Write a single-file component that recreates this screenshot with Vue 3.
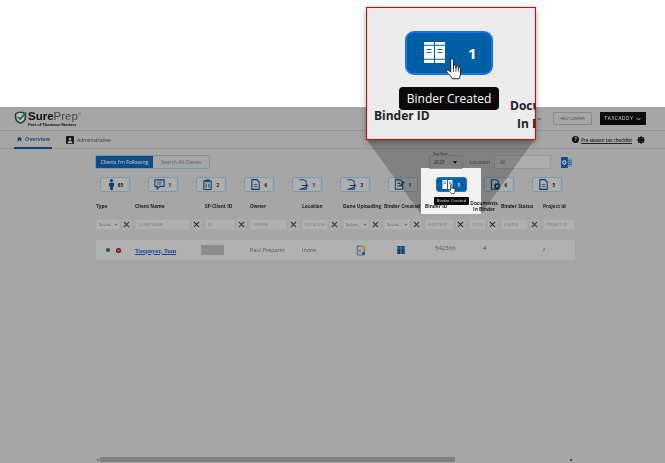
<script setup>
const stats = [
  { k: 'person', n: 65 }, { k: 'chat', n: 1 }, { k: 'clip', n: 2 }, { k: 'doc', n: 6 }, { k: 'arrow', n: 1 },
  { k: 'arrow', n: 3 }, { k: 'edit', n: 1 }, { k: 'binder', n: 1, active: true }, { k: 'sync', n: 6 }, { k: 'doc', n: 5 }
]
const cols = [
  { label: 'Type', kind: 'select' },
  { label: 'Client Name', ph: 'CLIENT NAME' },
  { label: 'SP Client ID', ph: 'ID' },
  { label: 'Owner', ph: 'OWNER' },
  { label: 'Location', ph: 'LOCATION' },
  { label: 'Done Uploading', kind: 'select' },
  { label: 'Binder Created', kind: 'select' },
  { label: 'Binder ID', ph: 'BINDER ID' },
  { label: 'Documents In Binder', ph: 'DOCU' },
  { label: 'Binder Status', ph: 'STATUS' },
  { label: 'Project Id', ph: 'PROJECT ID', noClear: true }
]
</script>

<template>
  <div class="screen">
    <div class="page">
      <header class="top">
        <div class="logo">
          <svg class="logo-mark" viewBox="0 0 16 16"><path d="M2 3.500C4 2 6 1.500 8 1.500S12 2 14 3.500v4.700c0 3-2.600 5.200-6 6.600-3.400-1.400-6-3.600-6-6.600z" fill="#c2c2c2" stroke="#263f42" stroke-width="2"/><path d="M4.800 7.200 7.600 10 14.800 1.800" fill="none" stroke="#1c7253" stroke-width="2.300"/></svg>
          <div>
            <div class="logo-name"><b>Sure</b>Prep<sup>®</sup></div>
            <div class="logo-sub">Part of Thomson Reuters</div>
          </div>
        </div>
        <div class="top-actions">
          <svg class="top-caret" viewBox="0 0 8 5" width="5" height="4"><path d="M1 1l3 3 3-3" fill="none" stroke="#333" stroke-width="1.200"/></svg>
          <span class="help">HELP CENTER</span>
          <span class="caddy">TAXCADDY <svg viewBox="0 0 8 5" width="5" height="4"><path d="M1 1l3 3 3-3" fill="none" stroke="#ddd" stroke-width="1.400"/></svg></span>
        </div>
      </header>

      <nav class="tabs">
        <div class="tab on">
          <svg viewBox="0 0 10 10" width="8" height="8"><path d="M5 .5 10 5H8.500v4.500H6V6.500H4v3H1.500V5H0z" fill="#0d3f6e"/></svg>
          <span>Overview</span>
        </div>
        <div class="tab">
          <svg viewBox="0 0 10 10" width="8" height="8"><rect width="10" height="10" rx="1" fill="#1a1a1a"/><circle cx="5" cy="3.800" r="1.700" fill="#a6a6a6"/><path d="M2 9c0-2 1.500-3 3-3s3 1 3 3z" fill="#a6a6a6"/></svg>
          <span>Administrative</span>
        </div>
        <div class="tabs-right">
          <i class="q">?</i>
          <a>Pre-season tax checklist</a>
          <svg viewBox="0 0 12 12" width="8" height="8"><circle cx="6" cy="6" r="3.400" fill="none" stroke="#111" stroke-width="2.400"/><path d="M6 0v12M0 6h12M1.800 1.800l8.400 8.400M10.200 1.800l-8.400 8.400" stroke="#111" stroke-width="1.500"/></svg>
        </div>
      </nav>

      <main class="board">
        <div class="controls">
          <div class="toggle">
            <span class="t-on">Clients I'm Following</span>
            <span class="t-off">Search All Clients</span>
          </div>
          <div class="year">
            <label>Tax Year</label>
            <div class="year-box">2023 <em></em></div>
          </div>
          <span class="loc-label">Location</span>
          <div class="loc-box">All</div>
          <svg class="outlook" viewBox="0 0 12 12" width="11" height="11"><rect x="5" y="1.500" width="7" height="9" fill="#6f94bd"/><path d="M7.500 4h4.500M7.500 6h4.500M7.500 8h4.500" stroke="#114c88" stroke-width=".6"/><rect x="0" y="0" width="7.500" height="12" rx=".6" fill="#114c88"/><circle cx="3.700" cy="6" r="1.800" fill="none" stroke="#d5dde5" stroke-width="1.100"/></svg>
        </div>

        <div class="stats">
          <button v-for="(s, i) in stats" :key="i" class="stat" :class="{ active: s.active }">
            <svg viewBox="0 0 12 12" width="11" height="11">
              <g v-if="s.k === 'person'" fill="#0d3f6e"><circle cx="6" cy="1.700" r="1.700"/><path d="M3.500 4h5l.5 4H7.800l-.4 4H4.600l-.4-4H3z"/></g>
              <g v-else-if="s.k === 'chat'" fill="none" stroke="#0d3f6e" stroke-width="1.200"><path d="M1 1h10v7H6l-2.500 3V8H1z"/><path d="M3.500 3.500h5M3.500 5.500h4" stroke-width=".8"/></g>
              <g v-else-if="s.k === 'clip'" fill="none" stroke="#0d3f6e" stroke-width="1.200"><rect x="2" y="2" width="8" height="9.500" rx=".8"/><path d="M4 1h4v2H4zM4.500 5v4.500M7.500 5v4.500" stroke-width="1"/></g>
              <g v-else-if="s.k === 'doc'" fill="none" stroke="#0d3f6e" stroke-width="1.200"><path d="M2 .7h5.500L10 3.300v8H2z"/><path d="M4 6h4M4 8.300h4" stroke-width=".8"/></g>
              <g v-else-if="s.k === 'arrow'"><path d="M1.500.7h5L9 3.300V5M9 9v2.300H1.500z" fill="none" stroke="#0d3f6e" stroke-width="1.100"/><path d="M4 6.500h4.500V4.500L11.500 7 8.500 9.500v-2H4z" fill="#0d3f6e"/></g>
              <g v-else-if="s.k === 'edit'" fill="none" stroke="#0d3f6e" stroke-width="1.100"><path d="M1.500.7H7l2.500 2.500v8.100h-8z"/><path d="M3.500 5h3M3.500 7.500h3"/><path d="M6.500 8 11 3" stroke-width="1.400"/></g>
              <g v-else-if="s.k === 'sync'"><path d="M1.500.7H7L9.500 3.200v8.100h-8z" fill="none" stroke="#0d3f6e" stroke-width="1.100"/><circle cx="7.800" cy="7.800" r="3.300" fill="#0d3f6e"/><circle cx="7.800" cy="7.800" r="1.300" fill="#a6a6a6"/></g>
              <g v-else fill="#fff"><path d="M.5 1h5v10h-5zM6.500 1h5v10h-5z"/><path d="M1.500 3.300h3M7.500 3.300h3M1.500 5h3M7.500 5h3" stroke="#0060a8" stroke-width=".7"/></g>
            </svg>
            <b>{{ s.n }}</b>
            <template v-if="s.active">
              <svg class="mini-hand" viewBox="0 0 16 22" width="8" height="11"><path d="M5 1.700c0-1.400 2.500-1.400 2.500 0V9V7.300c0-1.300 2.300-1.300 2.300 0V9.500 8c0-1.300 2.200-1.300 2.200 0v2-.800c0-1.200 2-1.200 2 0V14c0 2-.6 3.400-1.500 5H6.500C4.800 16.500 3.500 15.200 1.500 13c-1.200-1.300.5-2.800 1.800-1.700L5 13z" fill="#fff" stroke="#222" stroke-width="1.300"/></svg>
              <span class="mini-tip">Binder Created</span>
            </template>
          </button>
        </div>

        <div class="grid labels">
          <div v-for="c in cols" :key="c.label" class="lab">{{ c.label }}</div>
        </div>

        <div class="grid filters">
          <div v-for="c in cols" :key="c.label" class="fcell">
            <div class="field" :class="{ sel: c.kind === 'select' }">
              <template v-if="c.kind === 'select'"><span>Select...</span><svg viewBox="0 0 8 5" width="4" height="3"><path d="M1 1l3 3 3-3" fill="none" stroke="#333" stroke-width="1.300"/></svg></template>
              <template v-else>{{ c.ph }}</template>
            </div>
            <span v-if="!c.noClear" class="clear"><svg viewBox="0 0 8 8" width="7" height="7"><path d="M1 1l6 6M7 1 1 7" stroke="#2e2e2e" stroke-width="1.200"/></svg></span>
          </div>
        </div>

        <div class="grid row">
          <div class="dots"><i class="green"></i><i class="red"></i></div>
          <a class="name">Taxpayer, Tom</a>
          <div><span class="mask"></span></div>
          <div class="small">Paul Preparer</div>
          <div class="small">Irvine</div>
          <div class="ctr">
            <svg viewBox="0 0 12 12" width="10" height="11"><path d="M1.500.7H8l2 2.500v8.100H1.500z" fill="none" stroke="#335a7e" stroke-width="1"/><rect x="7" y="0" width="4.500" height="4.500" fill="#b79a37"/><path d="M3 5.500h3M3 7.500h3" stroke="#335a7e" stroke-width=".8"/><circle cx="9" cy="9.500" r="2" fill="#335a7e"/></svg>
          </div>
          <div class="ctr">
            <svg viewBox="0 0 12 12" width="8" height="8"><path d="M.5 0h5v12h-5zM6.500 0h5v12h-5z" fill="#0d3f6e"/><path d="M1.500 3h3M7.500 3h3" stroke="#a6a6a6" stroke-width=".8"/></svg>
          </div>
          <div class="raise">542366</div>
          <div class="raise four">4</div>
          <div></div>
          <div>f</div>
        </div>
      </main>

      <div class="scroll">
        <i class="arr"></i>
        <div class="thumb"></div>
        <i class="arr"></i>
      </div>
    </div>

    <svg class="beam" viewBox="0 0 665 463" width="665" height="463"><polygon points="366,139 535,139 481,214 481,168 421,168 421,214" fill="#000" fill-opacity=".22"/></svg>
    <div class="spot"></div>

    <aside class="lens">
      <div class="big-btn">
        <svg class="big-icon" viewBox="0 0 20 20" width="21" height="21"><path d="M0 0h9.500v20H0zM10.500 0h9.500v20h-9.500z" fill="#fff"/><path d="M0 3h9.500M10.500 3h9.500M0 16.500h9.500M10.500 16.500h9.500M2.500 7.200h4.500M13 7.200h4.500M2.500 10h4.500M13 10h4.500" stroke="#0060a8" stroke-width="1"/></svg>
        <b>1</b>
        <svg class="hand" viewBox="0 0 16 22" width="18" height="24"><path d="M5 1.700c0-1.400 2.500-1.400 2.500 0V9V7.300c0-1.300 2.300-1.300 2.300 0V9.500 8c0-1.300 2.200-1.300 2.200 0v2-.800c0-1.200 2-1.200 2 0V14c0 2-.6 3.400-1.500 5H6.500C4.800 16.500 3.500 15.200 1.500 13c-1.200-1.300.5-2.800 1.800-1.700L5 13z" fill="#fff" stroke="#1a1a1a" stroke-width=".9"/><path d="M7.500 9v3.500M9.800 9.500v3M12 10v2.500" stroke="#1a1a1a" stroke-width=".7"/></svg>
      </div>
      <div class="big-tip">Binder Created</div>
      <div class="big-id">Binder ID</div>
      <div class="big-docs">Documents<br><span>In Binder</span></div>
    </aside>
  </div>
</template>

<style>
html, body { margin: 0; background: #fff; }
</style>

<style scoped>
.screen {
  position: relative;
  width: 665px;
  height: 463px;
  overflow: hidden;
  background: #fff;
  font-family: "Open Sans", "Liberation Sans", sans-serif;
}
.page {
  position: absolute;
  inset: 107px 0 0 0;
  display: flex;
  flex-direction: column;
  background: #a6a6a6;
  color: #262626;
}
.top {
  height: 24px;
  display: flex;
  justify-content: space-between;
  align-items: center;
  padding: 0 19px 0 14px;
  border-bottom: 1px solid #969696;
  box-sizing: border-box;
  filter: blur(.35px);
}
.logo { display: flex; align-items: center; gap: 1px; }
.logo-mark { width: 13px; height: 15px; margin-top: -3px; }
.logo-name { font-size: 11.500px; line-height: 11px; color: #444; font-family: "Liberation Sans", sans-serif; }
.logo-name b { color: #111; }
.logo-name sup { font-size: 4px; vertical-align: top; line-height: 6px; }
.logo-sub { font-size: 3.900px; line-height: 5px; font-weight: 700; color: #111; white-space: nowrap; }
.top-actions { display: flex; gap: 8px; align-items: center; }
.top-caret { margin-right: 3px; }
.help {
  width: 39px; height: 13px; box-sizing: border-box;
  border: 1px solid #8b8b8b; border-radius: 1px;
  font-size: 3.800px; line-height: 11px; text-align: center; color: #444; white-space: nowrap;
}
.caddy {
  width: 46px; height: 13px;
  background: #0c0c0c; color: #ddd;
  font-size: 4.800px; line-height: 13px; letter-spacing: .6px;
  display: flex; justify-content: center; align-items: center; gap: 3px;
}
.tabs {
  height: 18px;
  display: flex;
  align-items: stretch;
  padding-left: 14px;
  border-bottom: 1px solid #969696;
  box-sizing: border-box;
  font-size: 5.500px;
  filter: blur(.35px);
}
.tab { display: flex; align-items: center; gap: 3px; padding: 0 2px 0 3px; margin-right: 11px; color: #3c3c3c; font-size: 5px; }
.tab.on { width: 33px; color: #0d3f6e; font-size: 5.500px; font-weight: 600; border-bottom: 2px solid #0d3f6e; height: 16px; }
.tabs-right { margin-left: auto; margin-right: 20px; display: flex; align-items: center; gap: 2px; }
.tabs-right a { font-size: 4.400px; font-weight: 600; text-decoration: underline; color: #222; margin-right: 3px; white-space: nowrap; }
.q { width: 7px; height: 7px; border-radius: 50%; background: #111; color: #bbb; font-size: 5px; line-height: 7px; text-align: center; font-style: normal; font-weight: 700; }
.board { position: relative; z-index: 2; padding-left: 96px; flex: 1; }
.controls { position: relative; height: 14px; margin-top: 6px; display: flex; align-items: center; filter: blur(.35px); }
.toggle {
  display: flex; width: 115px; height: 14px; box-sizing: border-box;
  border: 1px solid #7e93a6; border-radius: 2px; margin-left: -1px;
  font-size: 5px; line-height: 12px; text-align: center;
}
.t-on { width: 57px; background: #0d4c85; color: #d2d2d2; }
.t-off { flex: 1; color: #606060; }
.year { position: relative; margin-left: 219px; }
.year label { position: absolute; top: -4px; left: 4px; font-size: 3.800px; color: #333; line-height: 5px; white-space: nowrap; }
.year-box { width: 34px; height: 14px; box-sizing: border-box; border: 1px solid #949494; border-radius: 1px; padding: 3px 0 0 4px; font-size: 4.500px; color: #333; background: #a3a3a3; position: relative; }
.year-box em { position: absolute; right: 5px; top: 5px; border: 2.500px solid transparent; border-top: 3px solid #111; border-bottom: 0; }
.loc-label { margin-left: 7px; font-size: 5px; color: #4a4a4a; width: 24px; }
.loc-box { width: 57px; height: 14px; box-sizing: border-box; border: 1px solid #9a9a9a; background: #adadad; font-size: 4.800px; padding: 3px 5px; color: #555; }
.outlook { margin-left: 10px; }
.stats { position: relative; display: flex; gap: 18px; margin: 8px 0 0 4px; }
.stat {
  position: relative;
  width: 30px; height: 15px; box-sizing: border-box;
  border: 1px solid #7e98ad; border-radius: 2px;
  background: #adadad; padding: 0 6px 0 5px;
  display: flex; align-items: center; justify-content: space-between;
  font-family: "Open Sans", sans-serif;
  filter: blur(.35px);
}
.stat b { font-size: 4.500px; color: #111; }
.stat.active { width: 31px; background: #0060a8; border-color: #1e74de; border-radius: 3px; filter: blur(.25px); margin-right: -1px; }
.stat.active b { color: #fff; }
.mini-hand { position: absolute; left: 11px; top: 6px; }
.mini-tip {
  position: absolute; left: -3px; top: 19px; width: 35px; height: 8px;
  background: #0b0b0b; border-radius: 1px; color: #ddd;
  font-size: 4.200px; line-height: 8px; text-align: center; font-weight: 400; white-space: nowrap;
}
.grid {
  display: grid;
  grid-template-columns: 39px 70px 45px 52px 41px 41px 41px 44px 32px 42px 32px;
}
.labels { height: 12px; margin-top: 8px; align-items: center; font-size: 4.800px; font-weight: 700; color: #1c1c1c; filter: blur(.25px); }
.lab { line-height: 6px; white-space: nowrap; }
.lab:nth-child(9) { text-align: center; width: 30px; white-space: normal; }
.filters { margin-top: 7px; height: 11px; }
.fcell { display: flex; gap: 2px; padding-right: 4px; align-items: center; filter: blur(.35px); min-width: 0; }
.fcell:last-child { padding-right: 0; }
.field {
  flex: 1; min-width: 0; height: 11px; box-sizing: border-box;
  background: #b0b0b0; border: 1px solid #a9a9a9;
  font-size: 4px; line-height: 9px; padding-left: 2px;
  color: #7c7c7c; overflow: hidden; white-space: nowrap;
}
.field.sel { color: #555; display: flex; align-items: center; justify-content: space-between; padding-right: 1px; }
.clear { width: 9px; height: 11px; flex: none; background: #adadad; display: flex; align-items: center; justify-content: center; }
.row { height: 20px; margin-top: 10px; width: 479px; background: #b0b0b0; align-items: center; font-size: 6px; color: #565656; filter: blur(.35px); }
.small { font-size: 5.500px; }
.dots { display: flex; gap: 6px; padding-left: 10px; align-items: center; }
.dots i { width: 4px; height: 4px; border-radius: 50%; display: block; }
.dots .green { background: #1d6422; }
.dots .red { background: #7a1010; width: 5px; height: 5px; box-shadow: inset 0 0 0 1.500px #7a1010, inset 0 0 0 2px #ccc; }
.name { font-family: "Liberation Serif", serif; font-size: 6.500px; font-weight: 700; color: #1a3fa0; text-decoration: underline; white-space: nowrap; }
.mask { display: block; width: 23px; height: 10px; background: #8c8c8c; margin-left: -4px; }
.ctr { display: flex; align-items: center; padding-left: 13px; }
.raise { margin-top: -5px; padding-left: 10px; }
.four { padding-left: 14px; }
.scroll {
  height: 5px; margin: 0 0 1px 97px; display: flex; align-items: center; gap: 1px; width: 480px;
}
.thumb { width: 355px; height: 5px; background: #808080; }
.arr { width: 2px; height: 2px; background: #777; }
.arr:last-child { margin-left: 114px; background: #444; }
.beam { position: absolute; inset: 0; pointer-events: none; z-index: 4; }
.spot { position: absolute; left: 421px; top: 168px; width: 60px; height: 46px; background: #f2f2f2; z-index: 1; }
.lens {
  position: absolute; left: 366px; top: 7px;
  width: 170px; height: 133px; box-sizing: border-box;
  border: 1px solid #e00000;
  background: #ececec; overflow: hidden; z-index: 5;
  box-shadow: 0 2px 6px rgba(0,0,0,.35);
  color: #222;
}
.big-btn {
  position: absolute; left: 38px; top: 23px;
  width: 88px; height: 44px; box-sizing: border-box;
  background: #005ea2; border: 2px solid #1173f5; border-radius: 9px;
}
.big-btn b { position: absolute; left: 61px; top: 11px; color: #fff; font-size: 15px; line-height: 18px; }
.big-icon { position: absolute; left: 17px; top: 9px; }
.hand { position: absolute; left: 38px; top: 25px; }
.big-tip {
  position: absolute; left: 32px; top: 79px; width: 100px; height: 23px;
  background: #0a0a0a; color: #fff; border-radius: 4px;
  font-size: 12px; line-height: 23px; text-align: center; white-space: nowrap;
}
.big-id { position: absolute; left: 7px; top: 99px; font-size: 12px; font-weight: 700; line-height: 18px; white-space: nowrap; }
.big-docs { position: absolute; left: 143px; top: 89px; font-size: 12px; font-weight: 700; line-height: 18px; white-space: nowrap; }
.big-docs span { padding-left: 7px; }
</style>
